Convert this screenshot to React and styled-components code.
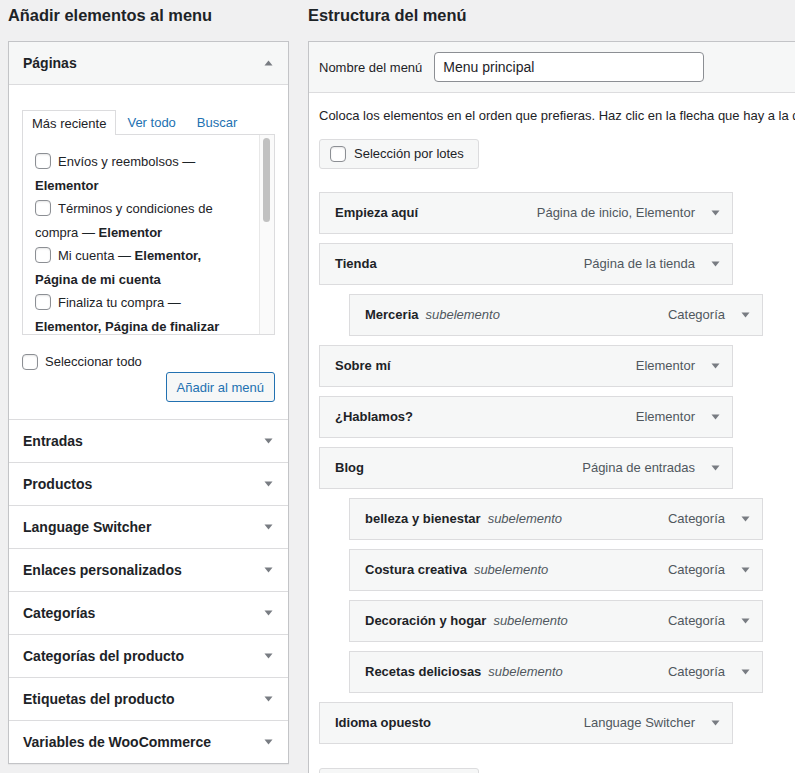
import React from "react";
import styled, { createGlobalStyle } from "styled-components";

const Global = createGlobalStyle`
  html, body { margin: 0; padding: 0; overflow: hidden; }
  body {
    background: #f0f0f1;
    font-family: "Liberation Sans", Arial, sans-serif;
    font-size: 13px;
    color: #1d2327;
  }
  * { box-sizing: border-box; }
`;

const Page = styled.div`
  display: flex;
  align-items: flex-start;
  gap: 19px;
  padding: 0 0 0 8px;
  width: max-content;
`;

const LeftCol = styled.div`
  width: 281px;
  flex: none;
`;

const RightCol = styled.div`
  width: 820px;
  flex: none;
`;

const Heading = styled.h2`
  margin: 4px 0 15px;
  font-size: 16.4px;
  line-height: 22px;
  font-weight: 700;
  color: #1d2327;
`;

const Accordion = styled.div`
  background: #fff;
  border: 1px solid #c3c4c7;
  box-shadow: 0 1px 1px rgba(0, 0, 0, 0.04);
`;

const SectionHead = styled.div`
  display: flex;
  align-items: center;
  justify-content: space-between;
  height: 43px;
  padding: 0 15px 0 14px;
  font-size: 14px;
  font-weight: 700;
  background: ${(p) => (p.$open ? "#f6f7f7" : "#fff")};
  border-top: ${(p) => (p.$first ? "none" : "1px solid #dcdcde")};
  border-bottom: ${(p) => (p.$open ? "1px solid #dcdcde" : "none")};
`;

const SectionBody = styled.div`
  padding: 25px 13px 17px;
`;

const Tabs = styled.div`
  display: flex;
  gap: 1px;
  height: 24px;
  position: relative;
  z-index: 1;
`;

const Tab = styled.div`
  display: flex;
  align-items: center;
  padding: 0 9px;
  height: ${(p) => (p.$active ? "25px" : "24px")};
  color: ${(p) => (p.$active ? "#1d2327" : "#2271b1")};
  background: ${(p) => (p.$active ? "#fff" : "transparent")};
  border: 1px solid ${(p) => (p.$active ? "#dcdcde" : "transparent")};
  border-bottom: none;
`;

const TabPanel = styled.div`
  display: flex;
  height: 201px;
  border: 1px solid #dcdcde;
  background: #fff;
`;

const PageList = styled.ul`
  flex: 1;
  list-style: none;
  margin: 0;
  padding: 15px 12px 0 12px;
  overflow: hidden;
`;

const PageItem = styled.li`
  line-height: 23.5px;
  margin: 0;
`;

const Check = styled.span`
  display: inline-block;
  width: 16px;
  height: 16px;
  border: 1px solid #8c8f94;
  border-radius: 4px;
  background: #fff;
  box-shadow: inset 0 1px 2px rgba(0, 0, 0, 0.1);
  vertical-align: middle;
  margin: -3px 7px 0 0;
  flex: none;
`;

const ScrollTrack = styled.div`
  width: 15px;
  flex: none;
  border-left: 1px solid #e8e8e8;
  background: #fafafa;
  padding: 3px 3px 0 3px;
`;

const ScrollThumb = styled.div`
  width: 7px;
  height: 84px;
  border-radius: 4px;
  background: #c1c1c1;
`;

const SelectAllRow = styled.label`
  display: flex;
  align-items: center;
  height: 20px;
  margin-top: 17px;
  line-height: 20px;
  & > span { margin-top: 0; }
`;

const ButtonRow = styled.div`
  display: flex;
  justify-content: flex-end;
`;

const PrimaryOutline = styled.button`
  height: 30px;
  padding: 0 10px;
  font-family: inherit;
  font-size: 13px;
  color: #2271b1;
  background: #f6f7f7;
  border: 1px solid #2271b1;
  border-radius: 3px;
`;

const Arrow = ({ up }) => (
  <svg width="9" height="6" viewBox="0 0 9 6">
    <polygon
      points={up ? "0.5,5.5 4.5,0.5 8.5,5.5" : "0.5,0.5 8.5,0.5 4.5,5.5"}
      fill="#787c82"
    />
  </svg>
);

const MenuPanel = styled.div`
  background: #fff;
  border: 1px solid #c3c4c7;
  border-right: none;
`;

const MenuHeader = styled.div`
  display: flex;
  align-items: center;
  gap: 12px;
  height: 51px;
  padding: 0 10px;
  background: #f6f7f7;
  border-bottom: 1px solid #dcdcde;
`;

const NameInput = styled.div`
  width: 270px;
  height: 30px;
  display: flex;
  align-items: center;
  padding: 0 8px;
  font-size: 14px;
  background: #fff;
  border: 1px solid #8c8f94;
  border-radius: 4px;
`;

const MenuBody = styled.div`
  padding: 0 10px;
`;

const Intro = styled.p`
  margin: 13px 0 13px;
  line-height: 19.5px;
  white-space: nowrap;
`;

const BulkButton = styled.div`
  display: inline-flex;
  align-items: center;
  width: 160px;
  height: 30px;
  padding: 0 10px;
  background: #f6f7f7;
  border: 1px solid #dcdcde;
  border-radius: 3px;
  & > span { margin: 0 8px 0 0; }
`;

const ItemList = styled.ul`
  list-style: none;
  margin: 23px 0 0;
  padding: 0;
  display: flex;
  flex-direction: column;
  gap: 9px;
`;

const Item = styled.li`
  display: flex;
  align-items: center;
  width: 414px;
  height: 42px;
  margin-left: ${(p) => (p.$sub ? "30px" : "0")};
  padding: 0 12px 0 15px;
  background: #f6f7f7;
  border: 1px solid #dcdcde;
`;

const ItemTitle = styled.span`
  font-weight: 700;
`;

const SubLabel = styled.span`
  font-style: italic;
  color: #50575e;
  margin-left: 7px;
`;

const ItemType = styled.span`
  margin-left: auto;
  margin-right: 16px;
  color: #50575e;
`;

const BottomBulk = styled.div`
  margin-top: 24px;
`;

const recent = [
  { title: "Envíos y reembolsos", meta: "Elementor" },
  { title: "Términos y condiciones de compra", meta: "Elementor" },
  { title: "Mi cuenta", meta: "Elementor, Página de mi cuenta" },
  { title: "Finaliza tu compra", meta: "Elementor, Página de finalizar compra" },
  { title: "Carrito", meta: "Elementor, Página del carrito" },
];

const sections = [
  "Entradas",
  "Productos",
  "Language Switcher",
  "Enlaces personalizados",
  "Categorías",
  "Categorías del producto",
  "Etiquetas del producto",
  "Variables de WooCommerce",
];

const items = [
  { title: "Empieza aquí", type: "Página de inicio, Elementor" },
  { title: "Tienda", type: "Página de la tienda" },
  { title: "Merceria", type: "Categoría", sub: true },
  { title: "Sobre mí", type: "Elementor" },
  { title: "¿Hablamos?", type: "Elementor" },
  { title: "Blog", type: "Página de entradas" },
  { title: "belleza y bienestar", type: "Categoría", sub: true },
  { title: "Costura creativa", type: "Categoría", sub: true },
  { title: "Decoración y hogar", type: "Categoría", sub: true },
  { title: "Recetas deliciosas", type: "Categoría", sub: true },
  { title: "Idioma opuesto", type: "Language Switcher" },
];

export default function App() {
  return (
    <>
      <Global />
      <Page>
        <LeftCol>
          <Heading>Añadir elementos al menu</Heading>
          <Accordion>
            <SectionHead $open $first>
              Páginas
              <Arrow up />
            </SectionHead>
            <SectionBody>
              <Tabs>
                <Tab $active>Más reciente</Tab>
                <Tab>Ver todo</Tab>
                <Tab>Buscar</Tab>
              </Tabs>
              <TabPanel>
                <PageList>
                  {recent.map((r) => (
                    <PageItem key={r.title}>
                      <Check />
                      {r.title} — <b>{r.meta}</b>
                    </PageItem>
                  ))}
                </PageList>
                <ScrollTrack>
                  <ScrollThumb />
                </ScrollTrack>
              </TabPanel>
              <SelectAllRow>
                <Check />
                Seleccionar todo
              </SelectAllRow>
              <ButtonRow>
                <PrimaryOutline>Añadir al menú</PrimaryOutline>
              </ButtonRow>
            </SectionBody>
            {sections.map((s) => (
              <SectionHead key={s}>
                {s}
                <Arrow />
              </SectionHead>
            ))}
          </Accordion>
        </LeftCol>
        <RightCol>
          <Heading>Estructura del menú</Heading>
          <MenuPanel>
            <MenuHeader>
              Nombre del menú
              <NameInput>Menu principal</NameInput>
            </MenuHeader>
            <MenuBody>
              <Intro>
                Coloca los elementos en el orden que prefieras. Haz clic en la
                flecha que hay a la derecha del elemento para mostrar más opciones
                de configuración.
              </Intro>
              <BulkButton>
                <Check />
                Selección por lotes
              </BulkButton>
              <ItemList>
                {items.map((it) => (
                  <Item key={it.title} $sub={it.sub}>
                    <ItemTitle>{it.title}</ItemTitle>
                    {it.sub && <SubLabel>subelemento</SubLabel>}
                    <ItemType>{it.type}</ItemType>
                    <Arrow />
                  </Item>
                ))}
              </ItemList>
              <BottomBulk>
                <BulkButton>
                  <Check />
                  Selección por lotes
                </BulkButton>
              </BottomBulk>
            </MenuBody>
          </MenuPanel>
        </RightCol>
      </Page>
    </>
  );
}
